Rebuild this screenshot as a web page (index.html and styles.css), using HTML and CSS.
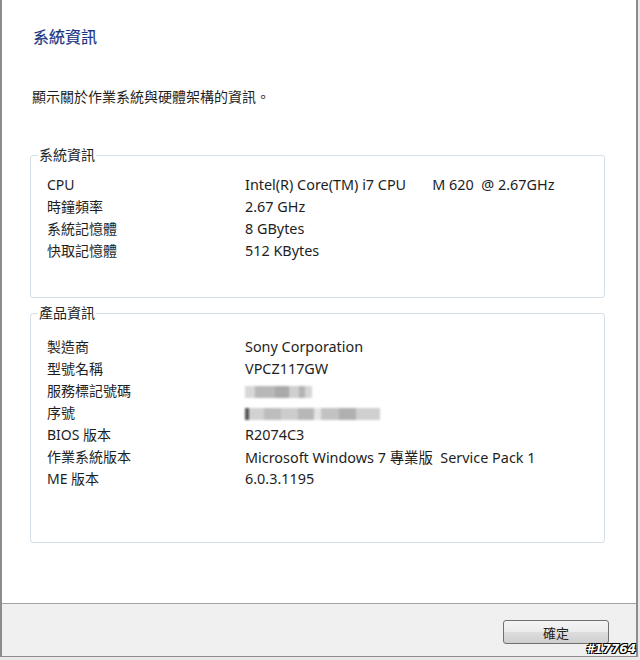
FILE: index.html
```html
<!DOCTYPE html>
<html lang="zh-Hant">
<head>
    <meta charset="UTF-8">
    <title>系統資訊</title>
    <link rel="stylesheet" href="styles.css">
</head>
<body>
    <div class="window">
        <div class="content">
            <h1 class="title">系統資訊</h1>
            <p class="desc">顯示關於作業系統與硬體架構的資訊。</p>

            <fieldset class="group group-sys">
                <legend>系統資訊</legend>
                <div class="rows">
                    <div class="row"><span class="label">CPU</span><span class="value">Intel(R) Core(TM) i7 CPU&nbsp;&nbsp;&nbsp;&nbsp;&nbsp;&nbsp;&nbsp;M 620&nbsp;&nbsp;@ 2.67GHz</span></div>
                    <div class="row"><span class="label">時鐘頻率</span><span class="value">2.67 GHz</span></div>
                    <div class="row"><span class="label">系統記憶體</span><span class="value">8 GBytes</span></div>
                    <div class="row"><span class="label">快取記憶體</span><span class="value">512 KBytes</span></div>
                </div>
            </fieldset>

            <fieldset class="group group-prod">
                <legend>產品資訊</legend>
                <div class="rows">
                    <div class="row"><span class="label">製造商</span><span class="value">Sony Corporation</span></div>
                    <div class="row"><span class="label">型號名稱</span><span class="value">VPCZ117GW</span></div>
                    <div class="row"><span class="label">服務標記號碼</span><span class="value"><span class="blur blur-short"></span></span></div>
                    <div class="row"><span class="label">序號</span><span class="value"><span class="blur blur-long"></span></span></div>
                    <div class="row"><span class="label">BIOS 版本</span><span class="value">R2074C3</span></div>
                    <div class="row"><span class="label">作業系統版本</span><span class="value">Microsoft Windows 7 專業版&nbsp;&nbsp;Service Pack 1</span></div>
                    <div class="row"><span class="label">ME 版本</span><span class="value">6.0.3.1195</span></div>
                </div>
            </fieldset>
        </div>
        <div class="footer">
            <button class="btn" type="button">確定</button>
        </div>
        <span class="watermark">#17764</span>
    </div>
</body>
</html>
```

FILE: styles.css
```css
/* Reset */
* {
    margin: 0;
    padding: 0;
    box-sizing: border-box;
}

body {
    background-color: #e9e9e9;
    font-family: "Noto Sans", "Noto Sans CJK TC", sans-serif;
    color: #1e1e1e;
}

/* Dialog frame */
.window {
    position: relative;
    width: 638px;
    height: 657px;
    background: #fff;
    border-left: 2px solid #8c8c8c;
    border-right: 2px solid #8c8c8c;
    border-bottom: 1px solid #8c8c8c;
    display: flex;
    flex-direction: column;
}

.content {
    flex: 1;
    padding: 27px 29px 0 28px;
}

.title {
    font-size: 16px;
    font-weight: normal;
    line-height: 20px;
    color: #1a3585;
    margin-left: 3px;
    -webkit-text-stroke: 0.2px #1a3585;
}

.desc {
    font-size: 14px;
    line-height: 20px;
    margin-top: 40px;
    margin-left: 2px;
}

/* Group boxes */
.group {
    border: 1px solid #d5dfe5;
    border-radius: 3px;
    padding: 0;
    width: 575px;
}

.group legend {
    font-size: 14px;
    line-height: 18px;
    margin-left: 7px;
    padding: 0 1px;
}

.group-sys {
    margin-top: 39px;
    padding: 9px 0 36px;
}

.group-prod {
    margin-top: 6px;
    padding: 13px 0 53px;
}

.rows {
    padding-left: 16px;
}

.row {
    display: flex;
    height: 22px;
    align-items: center;
    font-size: 14.4px;
    white-space: nowrap;
}

.label {
    width: 198px;
    font-size: 14px;
}

/* Masked values */
.blur {
    display: inline-block;
    height: 12px;
    filter: blur(1.2px);
    vertical-align: middle;
}

.blur-short {
    width: 67px;
    background: linear-gradient(90deg, #d8d8d8 0 15%, #b8b8b8 15% 45%, #a9a9a9 45% 65%, #cfcfcf 65% 80%, #b3b3b3 80% 90%, #d6d6d6 90%);
}

.blur-long {
    width: 135px;
    background: linear-gradient(90deg, #555 0 3%, #d2d2d2 3% 14%, #bdbdbd 14% 27%, #cccccc 27% 39%, #b7b7b7 39% 51%, #e4e4e4 51% 56%, #c2c2c2 56% 70%, #b0b0b0 70% 82%, #cfcfcf 82%);
}

/* Footer */
.footer {
    height: 53px;
    background: #f0f0f0;
    border-top: 1px solid #a3a3a3;
    display: flex;
    justify-content: flex-end;
    align-items: flex-start;
    padding: 16px 27px 0 0;
}

.btn {
    width: 106px;
    height: 24px;
    border: 1px solid #707070;
    border-radius: 3px;
    background: linear-gradient(#f4f4f4, #ebebeb 50%, #dddddd 51%, #cfcfcf);
    font-family: "Noto Sans CJK TC", sans-serif;
    font-size: 13px;
    color: #222;
}

.watermark {
    position: absolute;
    right: 0;
    bottom: 0;
    font-family: "DejaVu Sans", sans-serif;
    font-weight: bold;
    font-style: italic;
    font-size: 12px;
    line-height: 13px;
    color: #fff;
    text-shadow: -1px -1px 0 #000, 1px -1px 0 #000, -1px 1px 0 #000, 1px 1px 0 #000;
}
```
